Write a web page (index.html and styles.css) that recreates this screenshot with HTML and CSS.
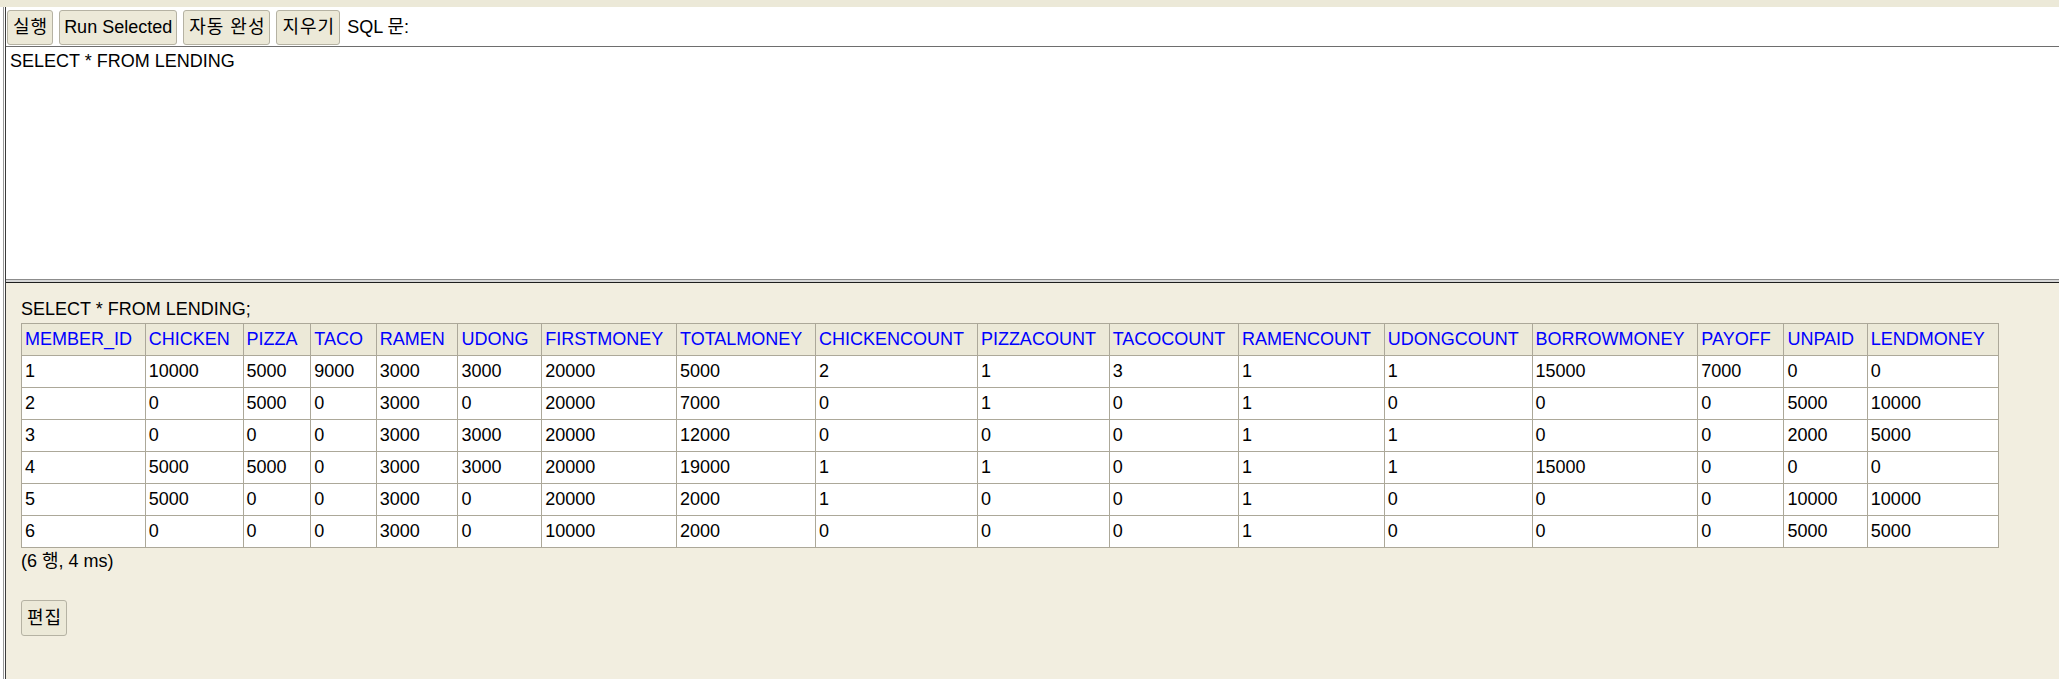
FILE: index.html
```html
<!DOCTYPE html>
<html lang="ko">
<head>
<meta charset="utf-8">
<title>H2 Console</title>
<link rel="stylesheet" href="styles.css">
</head>
<body>
<div class="topstrip"></div>
<div class="frame">
  <div class="inner">
    <div class="toolbar">
      <button class="btn ko">실행</button>
      <button class="btn">Run Selected</button>
      <button class="btn ko">자동 완성</button>
      <button class="btn ko">지우기</button>
      <span class="label">SQL 문:</span>
    </div>
    <div class="sqlbox">SELECT * FROM LENDING</div>
    <div class="sep"></div>
    <div class="result">
      <div class="stmt">SELECT * FROM LENDING;</div>
      <table class="grid">
        <tr><th>MEMBER_ID</th><th>CHICKEN</th><th>PIZZA</th><th>TACO</th><th>RAMEN</th><th>UDONG</th><th>FIRSTMONEY</th><th>TOTALMONEY</th><th>CHICKENCOUNT</th><th>PIZZACOUNT</th><th>TACOCOUNT</th><th>RAMENCOUNT</th><th>UDONGCOUNT</th><th>BORROWMONEY</th><th>PAYOFF</th><th>UNPAID</th><th>LENDMONEY</th></tr>
        <tr><td>1</td><td>10000</td><td>5000</td><td>9000</td><td>3000</td><td>3000</td><td>20000</td><td>5000</td><td>2</td><td>1</td><td>3</td><td>1</td><td>1</td><td>15000</td><td>7000</td><td>0</td><td>0</td></tr>
        <tr><td>2</td><td>0</td><td>5000</td><td>0</td><td>3000</td><td>0</td><td>20000</td><td>7000</td><td>0</td><td>1</td><td>0</td><td>1</td><td>0</td><td>0</td><td>0</td><td>5000</td><td>10000</td></tr>
        <tr><td>3</td><td>0</td><td>0</td><td>0</td><td>3000</td><td>3000</td><td>20000</td><td>12000</td><td>0</td><td>0</td><td>0</td><td>1</td><td>1</td><td>0</td><td>0</td><td>2000</td><td>5000</td></tr>
        <tr><td>4</td><td>5000</td><td>5000</td><td>0</td><td>3000</td><td>3000</td><td>20000</td><td>19000</td><td>1</td><td>1</td><td>0</td><td>1</td><td>1</td><td>15000</td><td>0</td><td>0</td><td>0</td></tr>
        <tr><td>5</td><td>5000</td><td>0</td><td>0</td><td>3000</td><td>0</td><td>20000</td><td>2000</td><td>1</td><td>0</td><td>0</td><td>1</td><td>0</td><td>0</td><td>0</td><td>10000</td><td>10000</td></tr>
        <tr><td>6</td><td>0</td><td>0</td><td>0</td><td>3000</td><td>0</td><td>10000</td><td>2000</td><td>0</td><td>0</td><td>0</td><td>1</td><td>0</td><td>0</td><td>0</td><td>5000</td><td>5000</td></tr>
      </table>
      <div class="count">(6 행, 4 ms)</div>
      <button class="btn ko edit">편집</button>
    </div>
  </div>
</div>
</body>
</html>
```

FILE: styles.css
```css
html, body {
  margin: 0;
  padding: 0;
  background: #ffffff;
}

body {
  font-family: "Liberation Sans", "Noto Sans CJK KR", sans-serif;
  font-size: 18px;
  color: #000000;
  width: 2059px;
  height: 679px;
  overflow: hidden;
}

.topstrip {
  height: 7px;
  background: #ece9d8;
}

.frame {
  margin-left: 3px;
  border-left: 1px solid #9a9a9a;
  padding-left: 1px;
  background: #ffffff;
}

.inner {
  border-left: 1px solid #3c3c3c;
}

.toolbar {
  height: 39px;
  box-sizing: border-box;
  padding: 3px 0 0 1px;
  display: flex;
  align-items: flex-start;
  gap: 6px;
  background: #ffffff;
}

.btn {
  font-family: "Liberation Sans", "Noto Sans CJK KR", sans-serif;
  font-size: 18px;
  color: #000000;
  height: 35px;
  box-sizing: border-box;
  padding: 0 4px;
  background: #ece9d8;
  border: 1px solid #b5b2a3;
  border-radius: 3px;
  line-height: 33px;
  margin: 0;
}

.btn.ko {
  letter-spacing: 1px;
  padding: 0 4px 0 5px;
}

.label {
  line-height: 35px;
  margin-left: 1px;
}

.sqlbox {
  border-top: 1px solid #6e6e6e;
  background: #ffffff;
  padding: 4px 0 0 4px;
  line-height: 21px;
  height: 228px;
}

.sep {
  height: 2px;
  border-top: 1px solid #8c8c8c;
  border-bottom: 1px solid #1e1e1e;
  background: #d6d6d6;
}

.result {
  background: #f2eee0;
  height: 396px;
  box-sizing: border-box;
  padding: 16px 15px 0 15px;
}

.stmt {
  line-height: 21px;
  margin-bottom: 3px;
}

.grid {
  border-collapse: collapse;
  background: #ffffff;
}

.grid th,
.grid td {
  border: 1px solid #aca899;
  padding: 5px 12.75px 5px 3px;
  line-height: 21px;
  text-align: left;
  font-weight: normal;
  white-space: nowrap;
}

.grid th {
  background: #ece9d8;
  color: #0000ff;
}

.count {
  line-height: 21px;
  margin-top: 3px;
}

.edit {
  margin-top: 28px;
  height: 36px;
  padding: 0 5px 0 6px;
}
```
